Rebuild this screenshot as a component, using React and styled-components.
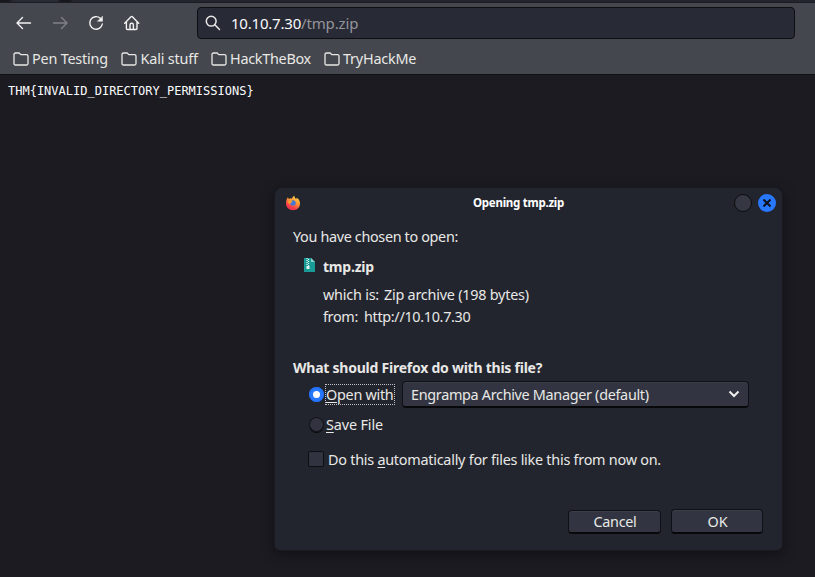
import React from 'react';
import styled, { createGlobalStyle } from 'styled-components';

const Global = createGlobalStyle`
  * { box-sizing: border-box; }
  body {
    margin: 0;
    background: #1c1b22;
    font-family: "Noto Sans", sans-serif;
    color: #e8e8e6;
  }
`;

const Window = styled.div`
  height: 577px;
  overflow: hidden;
  position: relative;
  background: #1c1b22;
`;
const TabStrip = styled.div`
  height: 3px;
  background: linear-gradient(90deg, #17181d 8px, #292b34 14px 58px, #17181d 60px 70px, #23252e 73px);
  border-bottom: 1px solid #1b1d23;
`;
const Toolbar = styled.header`
  height: 72px;
  background: #44474d;
  border-bottom: 1px solid #111217;
`;
const NavRow = styled.div`
  display: flex;
  align-items: center;
  height: 40px;
  padding: 0 20px 0 12px;
`;
const NavButton = styled.button`
  display: flex;
  width: 24px;
  height: 24px;
  margin-right: 12px;
  padding: 0;
  border: 0;
  background: none;
  color: ${p => (p.disabled ? '#808287' : '#f2f2f3')};
  align-items: center;
  justify-content: center;
`;
const AddressBar = styled.div`
  display: flex;
  align-items: center;
  flex: 1;
  height: 32px;
  margin-left: 41px;
  padding-left: 7px;
  border: 1px solid #0e0f13;
  border-radius: 4px;
  background: #282a35;
`;
const Url = styled.div`
  margin-left: 10px;
  font-size: 15px;
  line-height: 24px;
  letter-spacing: -0.21px;
  color: #fbfbfe;
`;
const UrlPath = styled.span`
  color: #94949b;
  letter-spacing: -0.15px;
`;
const BookmarkRow = styled.nav`
  display: flex;
  height: 32px;
  padding-left: 12.5px;
`;
const Bookmark = styled.div`
  display: flex;
  align-items: center;
  width: ${p => p.$width}px;
  gap: 3.5px;
  white-space: nowrap;
`;
const Text = styled.span`
  font-size: ${p => p.$size || 14.4}px;
  font-weight: ${p => (p.$bold ? 700 : 400)};
  letter-spacing: ${p => p.$track || 0}px;
  line-height: 22px;
  white-space: nowrap;
`;
const Page = styled.pre`
  margin: 8px;
  font: 12px/16px "DejaVu Sans Mono", monospace;
  color: #fbfbfe;
`;

const Dialog = styled.section`
  position: absolute;
  left: 275px;
  top: 188px;
  width: 507px;
  height: 362px;
  border-radius: 7px 7px 5px 5px;
  background: #23252e;
  box-shadow: 0 0 0 1px #191a20, 0 3px 12px 2px rgba(0, 0, 0, 0.35);
`;
const TitleBar = styled.header`
  display: grid;
  grid-template-columns: 48px 1fr 70px;
  align-items: center;
  height: 30px;
  padding: 0 6px 0 10px;
`;
const TitleText = styled.h1`
  margin: 0 2px 0 0;
  text-align: center;
  font-size: 11.5px;
  line-height: 16px;
  letter-spacing: -0.26px;
  color: #fff;
`;
const WindowButtons = styled.div`
  display: flex;
  justify-content: flex-end;
  gap: 6px;
`;
const RoundButton = styled.button`
  display: flex;
  align-items: center;
  justify-content: center;
  width: 18px;
  height: 18px;
  padding: 0;
  border-radius: 50%;
  border: ${p => (p.$close ? '0' : '1px solid #0b0c0f')};
  background: ${p => (p.$close ? '#2777ff' : '#353842')};
  color: #0d1017;
`;
const Body = styled.div`
  padding: 8px 18px 0;
`;
const Row = styled.div`
  display: flex;
  align-items: center;
  height: ${p => p.$height || 22}px;
  margin-top: ${p => p.$top || 0}px;
  padding-left: ${p => p.$indent || 0}px;
`;
const Value = styled(Text)`
  margin-left: ${p => p.$gap || 5}px;
`;
const FileIcon = styled.svg`
  margin: -4px 8px 0 0;
`;
const Radio = styled.span`
  display: flex;
  align-items: center;
  justify-content: center;
  width: 15px;
  height: 15px;
  margin: ${p => (p.$on ? '0 1.5px 0 0.5px' : '-2px 2.500px 0 0.500px')};
  border-radius: 50%;
  background: ${p => (p.$on ? '#2777ff' : '#313440')};
  box-shadow: ${p => (p.$on ? 'inset 0 0 0 1px #216cf0' : 'inset 0 0 0 1px #101116, 0 1px 0 #090a0d')};
  &::after {
    content: "";
    width: 7px;
    height: 7px;
    border-radius: 50%;
    background: ${p => (p.$on ? '#fff' : 'transparent')};
  }
`;
const Checkbox = styled.span`
  width: 16px;
  height: 16px;
  margin: -2px 4px 0 0;
  border: 1px solid #0d0e12;
  border-radius: 2px;
  background: #313440;
`;
const FocusLabel = styled.label`
  display: flex;
  align-items: center;
  width: 70px;
  height: 21px;
  border: 1px dotted #c0c1c4;
`;
const Key = styled.u`
  text-decoration-thickness: 1px;
  text-underline-offset: 2px;
  text-decoration-skip-ink: none;
`;
const Select = styled.div`
  display: flex;
  align-items: center;
  justify-content: space-between;
  width: 347px;
  height: 27px;
  margin-left: 7px;
  padding: 1px 8px 0;
  border: 1px solid #101116;
  border-bottom: 2px solid #07080a;
  border-radius: 4px;
  background: #323541;
  box-shadow: inset 0 1px 0 #3b3e49;
`;
const Chevron = styled.svg`
  margin-top: -1px;
`;
const Actions = styled.footer`
  display: flex;
  justify-content: flex-end;
  align-items: flex-end;
  gap: 10px;
  height: 26px;
  margin-top: 37px;
  padding-right: 1px;
`;
const Button = styled.button`
  width: ${p => p.$width}px;
  height: ${p => p.$height}px;
  padding: ${p => p.$pad || '0'};
  border: 1px solid #101116;
  border-bottom: 2px solid #07080a;
  border-radius: 4px;
  background: #323541;
  box-shadow: inset 0 1px 0 #3b3e49;
  color: #e8e8e6;
  font-family: inherit;
  line-height: 20px;
`;

const Stroke = ({ size = 16, width = 1.4, children }) => (
  <svg width={size} height={size} viewBox="0 0 16 16" fill="none" stroke="currentColor" strokeWidth={width} strokeLinecap="round" strokeLinejoin="round">
    {children}
  </svg>
);

const FirefoxIcon = () => (
  <svg width="16" height="16" viewBox="0 0 16 16">
    <defs>
      <linearGradient id="flame" x1="0.8" y1="0" x2="0.3" y2="1">
        <stop offset="0" stopColor="#ffe04b" />
        <stop offset="0.45" stopColor="#ff9135" />
        <stop offset="0.8" stopColor="#f8384c" />
        <stop offset="1" stopColor="#e53950" />
      </linearGradient>
    </defs>
    <path fill="url(#flame)" d="M1.5 5C1.8 3.8 2.3 3 3 2.3L3.7 4 5.6 3.3C6 3.5 6.5 3.8 7 3.8 7.3 2.5 8.3 1.5 9.3.8 9.4 2.3 10.4 3.3 11.2 4.2L11.6 2.7C14 4 15 6 15 8.5 15 12.5 12 15.2 8 15.2S1 12.3 1 8.5C1 7 1.2 5.8 1.5 5Z" />
    <circle cx="8" cy="7.9" r="2.7" fill="#4477d5" />
    <path fill="#ffa22f" d="M3.3 6.1C4.6 5 6.4 5.4 7.5 6.7L6.2 7.7C5.2 7.6 4.6 8.4 5.2 9.5 3.6 9 2.9 7.5 3.3 6.1Z" />
  </svg>
);

const bookmarks = [
  { name: 'Pen Testing', width: 108.5, track: -0.2 },
  { name: 'Kali stuff', width: 89.5, track: -0.17 },
  { name: 'HackTheBox', width: 113, track: -0.28 },
  { name: 'TryHackMe', width: 100, track: -0.2 },
];

export default function App() {
  return (
    <Window>
      <Global />
      <TabStrip />
      <Toolbar>
        <NavRow>
          <NavButton aria-label="Back"><Stroke><path d="M14.5 8H1.5M6.5 2.5 1 8l5.5 5.5" /></Stroke></NavButton>
          <NavButton aria-label="Forward" disabled><Stroke><path d="M1.5 8h13M9.5 2.5 15 8l-5.5 5.5" /></Stroke></NavButton>
          <NavButton aria-label="Reload">
            <Stroke><path d="M12.3 3.3A6.3 6.3 0 1 0 14.3 9" /><path d="M14.5 1.5v4.8H9.7Z" fill="currentColor" strokeWidth="0.5" /></Stroke>
          </NavButton>
          <NavButton aria-label="Home">
            <Stroke><path d="M.7 8.2 7 1.7q.7-.7 1.4 0L14.7 8.2M2.4 7v6.5q0 1 1 1h8.6q1 0 1-1V7M6 14.3V10q0-1.7 1.7-1.7T9.4 10v4.3" /></Stroke>
          </NavButton>
          <AddressBar>
            <Stroke width={1.5}><circle cx="6.2" cy="6.2" r="4.9" /><path d="m9.8 9.8 4.7 4.7" /></Stroke>
            <Url>10.10.7.30<UrlPath>/tmp.zip</UrlPath></Url>
          </AddressBar>
        </NavRow>
        <BookmarkRow>
          {bookmarks.map(b => (
            <Bookmark key={b.name} $width={b.width}>
              <Stroke width={1.3}><path d="M2.5 2h3.7l1.6 1.6h5.7q1.5 0 1.5 1.5v7.4q0 1.5-1.5 1.5h-11Q1 14 1 12.5v-9Q1 2 2.5 2Z" /></Stroke>
              <Text $track={b.track}>{b.name}</Text>
            </Bookmark>
          ))}
        </BookmarkRow>
      </Toolbar>
      <Page>{'THM{INVALID_DIRECTORY_PERMISSIONS}'}</Page>

      <Dialog>
        <TitleBar>
          <FirefoxIcon />
          <TitleText>Opening tmp.zip</TitleText>
          <WindowButtons>
            <RoundButton aria-label="Maximize" />
            <RoundButton $close aria-label="Close">
              <svg width="8" height="8" viewBox="0 0 8 8" stroke="currentColor" strokeWidth="2"><path d="m.5.5 7 7M7.5.5l-7 7" /></svg>
            </RoundButton>
          </WindowButtons>
        </TitleBar>
        <Body>
          <Row><Text $track={-0.34}>You have chosen to open:</Text></Row>
          <Row $top={8} $indent={11}>
            <FileIcon width="11" height="14" viewBox="0 0 11 14">
              <path d="M0 0h7l4 4v10H0Z" fill="#189a96" />
              <path d="M7 0l4 4H7Z" fill="#8bd0c8" />
              <path d="M3 0v8M4.5 1v8" stroke="#e9f7f5" strokeWidth="1.2" strokeDasharray="1 1" />
              <path d="M2.5 8h3v3h-3z" fill="#dff3f0" />
            </FileIcon>
            <Text $bold $size={14} $track={-0.21}>tmp.zip</Text>
          </Row>
          <Row $top={6} $indent={30}>
            <Text $track={-0.22}>which is:</Text>
            <Value $track={-0.23}>Zip archive (198 bytes)</Value>
          </Row>
          <Row $indent={30}>
            <Text $track={-0.33}>from:</Text>
            <Value $gap={6} $track={-0.32}>http://10.10.7.30</Value>
          </Row>
          <Row $top={29}><Text $bold $size={14} $track={-0.24}>What should Firefox do with this file?</Text></Row>
          <Row $top={2} $indent={15} $height={27}>
            <Radio $on />
            <FocusLabel><Text $track={-0.28}><Key>O</Key>pen with</Text></FocusLabel>
            <Select>
              <Text $track={-0.31}>Engrampa Archive Manager (default)</Text>
              <Chevron width="12" height="8" viewBox="0 0 12 8" fill="none" stroke="#eeeeec" strokeWidth="2"><path d="m1.5 1.5 4.5 4.5 4.5-4.5" /></Chevron>
            </Select>
          </Row>
          <Row $top={6} $indent={15}>
            <Radio />
            <Text $track={-0.13}><Key>S</Key>ave File</Text>
          </Row>
          <Row $top={13} $indent={15}>
            <Checkbox />
            <Text $track={-0.25}>Do this <Key>a</Key>utomatically for files like this from now on.</Text>
          </Row>
          <Actions>
            <Button $width={93} $height={24} $pad="0 0 0 1px"><Text $track={-0.3}>Cancel</Text></Button>
            <Button $width={92} $height={25} $pad="1px 0 0 1px"><Text>OK</Text></Button>
          </Actions>
        </Body>
      </Dialog>
    </Window>
  );
}
